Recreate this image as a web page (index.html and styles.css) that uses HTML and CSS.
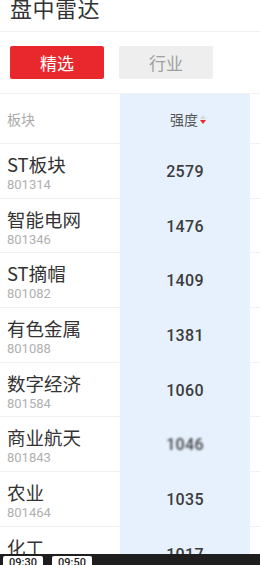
FILE: index.html
```html
<!DOCTYPE html>
<html lang="zh">
<head>
<meta charset="utf-8">
<link rel="stylesheet" href="styles.css">
</head>
<body>
<div class="page">
  <div class="title-bar"><span class="title">盘中雷达</span></div>
  <div class="tabs">
    <div class="tab active">精选</div>
    <div class="tab">行业</div>
  </div>
  <div class="table">
    <div class="row head">
      <div class="c-name head-name"><span class="h-name">板块</span></div>
      <div class="c-val"><span class="h-val">强度</span><span class="sort"><i class="up"></i><i class="down"></i></span></div>
      <div class="c-pad"></div>
    </div>
    <div class="row">
      <div class="c-name"><div class="nm">ST板块</div><div class="code">801314</div></div>
      <div class="c-val"><span class="num">2579</span></div>
      <div class="c-pad"></div>
    </div>
    <div class="row">
      <div class="c-name"><div class="nm">智能电网</div><div class="code">801346</div></div>
      <div class="c-val"><span class="num">1476</span></div>
      <div class="c-pad"></div>
    </div>
    <div class="row">
      <div class="c-name"><div class="nm">ST摘帽</div><div class="code">801082</div></div>
      <div class="c-val"><span class="num">1409</span></div>
      <div class="c-pad"></div>
    </div>
    <div class="row">
      <div class="c-name"><div class="nm">有色金属</div><div class="code">801088</div></div>
      <div class="c-val"><span class="num">1381</span></div>
      <div class="c-pad"></div>
    </div>
    <div class="row">
      <div class="c-name"><div class="nm">数字经济</div><div class="code">801584</div></div>
      <div class="c-val"><span class="num">1060</span></div>
      <div class="c-pad"></div>
    </div>
    <div class="row">
      <div class="c-name"><div class="nm">商业航天</div><div class="code">801843</div></div>
      <div class="c-val"><span class="num blur">1046</span></div>
      <div class="c-pad"></div>
    </div>
    <div class="row">
      <div class="c-name"><div class="nm">农业</div><div class="code">801464</div></div>
      <div class="c-val"><span class="num">1035</span></div>
      <div class="c-pad"></div>
    </div>
    <div class="row">
      <div class="c-name"><div class="nm">化工</div><div class="code">801094</div></div>
      <div class="c-val"><span class="num">1017</span></div>
      <div class="c-pad"></div>
    </div>
  </div>
  <div class="bottom-bar">
    <span class="time">09:30</span>
    <span class="time">09:50</span>
  </div>
</div>
</body>
</html>
```

FILE: styles.css
```css
html, body {
  margin: 0;
  padding: 0;
  background: #ffffff;
  overflow: hidden;
}
body {
  font-family: "Noto Sans CJK SC", "Noto Sans", sans-serif;
  color: #333333;
}
.page {
  position: relative;
  width: 260px;
  height: 565px;
  overflow: hidden;
}
.title-bar {
  height: 32px;
  border-bottom: 1px solid #f2f2f2;
  padding-left: 10px;
  box-sizing: border-box;
  overflow: hidden;
}
.title {
  display: block;
  font-size: 22px;
  line-height: 22px;
  margin-top: -4px;
  color: #333333;
  letter-spacing: 0.5px;
}
.tabs {
  height: 62px;
  display: flex;
  align-items: center;
  gap: 15px;
  padding-left: 10px;
  border-bottom: 1px solid #f2f2f2;
  box-sizing: border-box;
}
.tab {
  width: 94px;
  height: 33px;
  border-radius: 2px;
  background: #eeeeee;
  color: #a0a0a0;
  font-size: 17px;
  display: flex;
  align-items: center;
  justify-content: center;
}
.tab.active {
  background: #e8282d;
  color: #ffffff;
}
.table {
  display: flex;
  flex-direction: column;
}
.row {
  display: grid;
  grid-template-columns: 120px 130px 10px;
  height: 54.7px;
}
.row.head {
  height: 50px;
}
.c-name, .c-pad {
  border-bottom: 1px solid #f2f2f2;
  box-sizing: border-box;
}
.c-name {
  padding-left: 7px;
  padding-top: 9px;
  display: flex;
  flex-direction: column;
}
.c-name.head-name {
  padding-top: 0;
  justify-content: center;
}
.c-val {
  background: #e6f1fd;
  display: flex;
  align-items: center;
  justify-content: center;
}
.h-name {
  font-size: 14px;
  color: #aaaaaa;
}
.h-val {
  font-size: 14px;
  color: #555555;
  margin-left: 6px;
}
.sort {
  display: inline-flex;
  flex-direction: column;
  gap: 1px;
  margin-left: 2px;
}
.sort i {
  display: block;
  width: 0;
  height: 0;
  border-left: 3.5px solid transparent;
  border-right: 3.5px solid transparent;
}
.sort .up {
  border-bottom: 4px solid #d8d8d8;
}
.sort .down {
  border-top: 4px solid #e8282d;
}
.nm {
  font-size: 18.5px;
  line-height: 22px;
  color: #333333;
}
.code {
  font-family: "Roboto", "Noto Sans", sans-serif;
  font-size: 13px;
  line-height: 15px;
  margin-top: 2px;
  color: #b0b0b0;
}
.num {
  font-family: "Roboto", "Noto Sans", sans-serif;
  font-size: 16px;
  font-weight: 500;
  color: #3c3c3c;
  letter-spacing: 0.3px;
}
.num.blur {
  filter: blur(1.2px);
  color: #444444;
}
.bottom-bar {
  position: absolute;
  left: 0;
  right: 0;
  top: 554px;
  height: 11px;
  background: #1e1e1e;
  display: flex;
  gap: 9px;
  padding-left: 3px;
  padding-top: 2px;
  box-sizing: border-box;
  overflow: hidden;
}
.time {
  display: block;
  width: 40px;
  height: 14px;
  background: #ffffff;
  border-radius: 2px;
  color: #222222;
  font-family: "Roboto", sans-serif;
  font-size: 11px;
  line-height: 14px;
  font-weight: 500;
  text-align: center;
}
```
